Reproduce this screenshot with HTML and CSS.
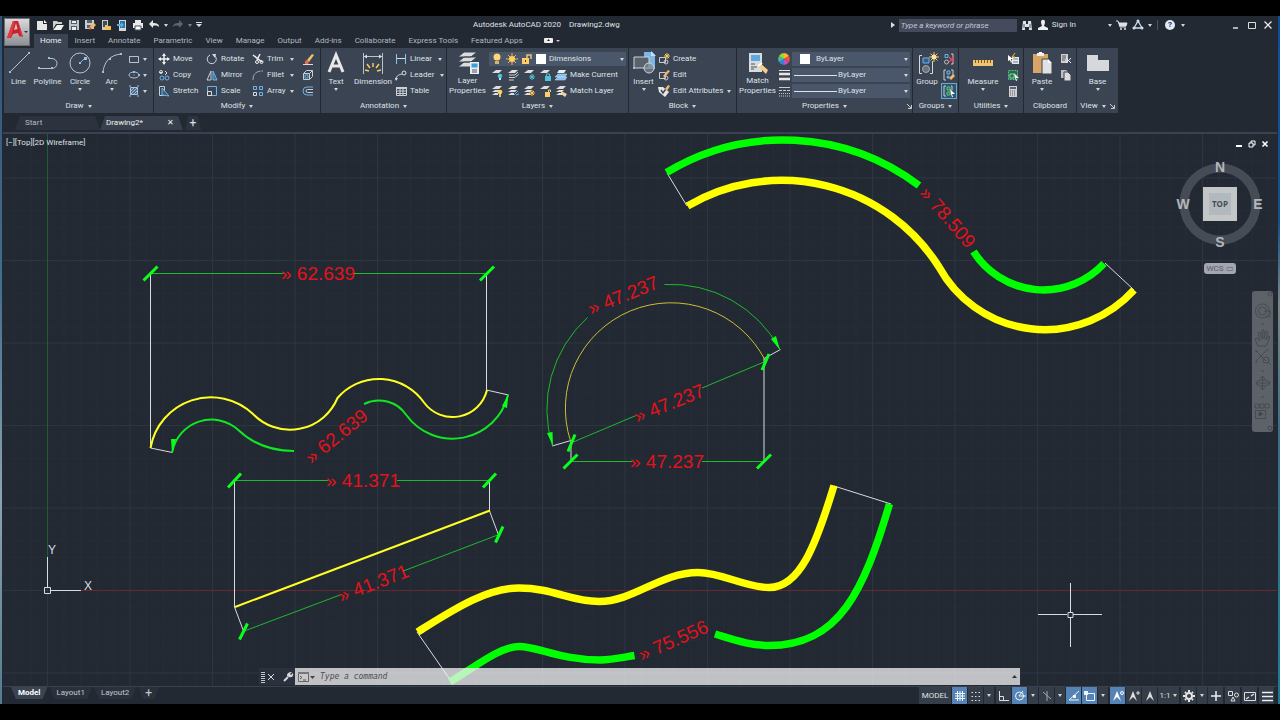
FILE: index.html
```html
<!DOCTYPE html>
<html lang="en">
<head>
<meta charset="utf-8">
<title>Autodesk AutoCAD 2020 - Drawing2.dwg</title>
<link rel="stylesheet" href="styles.css">
</head>
<body>
<div class="app">
<header class="head">
  <button class="logo" aria-label="Application menu">
    <svg width="24" height="28" viewBox="0 0 24 28"><path d="M2 20L8 3h5l5 16-4-1-1-3-5 1-2 4z" fill="#c9202b"/><path d="M9 12l2-7 1.500 6z" fill="#c5c7c9"/><path d="M2 20L8 3l2 1-4 15zM13 3l5 16-2-1z" fill="#e5383f"/><path d="M19 13h4l-2 2z" fill="#333"/></svg>
  </button>
  <div class="titlebar">
    <div class="qat">
      <button aria-label="New"><svg class="i" viewBox="0 0 12 12"><path d="M1 2h6v3h4v6H1z" fill="#e6e6e6"/><path d="M8 1l3 3H8z" fill="#fff"/></svg></button>
      <button aria-label="Open"><svg class="i" viewBox="0 0 12 12"><path d="M1 10V2h4l1 1h4v2H4z" fill="#cfcfcf"/><path d="M2 10l3-4h7l-3 5H1z" fill="#f1f1f1"/></svg></button>
      <button aria-label="Save"><svg class="i" viewBox="0 0 12 12"><path d="M1 1h10v10H1z" fill="#bfc4ca"/><path d="M3 1h6v4H3zM3 7h6v4H3z" fill="#525b68"/><path d="M4 2h4v2H4zM4 8h4v3H4z" fill="#eee"/></svg></button>
      <button aria-label="Save as"><svg class="i" viewBox="0 0 12 12"><path d="M1 1h9v9H1z" fill="#c8ccd0"/><path d="M3 1h5v3H3zM3 6h4v3H3z" fill="#5b636f"/><path d="M5 10l1-3 4-3 2 2-4 4z" fill="#efb96a"/><path d="M5 11l1-3 2 2z" fill="#e04a36"/></svg></button>
      <button aria-label="Open from web"><svg class="i" viewBox="0 0 12 12"><path d="M2 1h6v10H2z" fill="#c8ccd0"/><path d="M3 2h4v6H3z" fill="#414a58"/><path d="M5 11V6h2l1 1h3v4z" fill="#f1c24f"/></svg></button>
      <button aria-label="Save to web"><svg class="i" viewBox="0 0 12 12"><path d="M3 1h7v11H3z" fill="#d5d8db"/><path d="M4 2h5v7H4z" fill="#2d6f9e"/><path d="M1 5h4V3l3 3-3 3V7H1z" fill="#4fb2e6"/></svg></button>
      <button aria-label="Plot"><svg class="i" viewBox="0 0 12 12"><path d="M3 1h6v3H3zM1 4h10v5H1z" fill="#e9e9e9"/><path d="M3 7h6v4H3z" fill="#fff" stroke="#48515f"/></svg></button>
      <button aria-label="Undo"><svg class="i" viewBox="0 0 12 12"><path d="M1 5l4-4v3c4 0 6 1 6 4-1-1-3-2-6-1v2z" fill="#e6e6e6"/></svg></button>
      <span class="caret"></span>
      <button aria-label="Redo"><svg class="i" viewBox="0 0 12 12"><path d="M11 5L7 1v3C3 4 1 5 1 8c1-1 3-2 6-1v2z" fill="#5d6571"/></svg></button>
      <span class="caret dim"></span>
      <button class="slim" aria-label="Customize toolbar"><svg width="6" height="6" viewBox="0 0 6 6"><path d="M0 0h6v1H0zM0 2h6L3 5z" fill="#ddd"/></svg></button>
    </div>
    <div class="title"><span>Autodesk AutoCAD 2020</span><span>Drawing2.dwg</span></div>
    <div class="tools">
      <svg width="4" height="6" viewBox="0 0 4 6"><path d="M0 0l4 3-4 3z" fill="#ddd"/></svg>
      <input class="search" type="text" placeholder="Type a keyword or phrase" aria-label="Search">
      <button aria-label="Find"><svg class="i" viewBox="0 0 12 12"><path d="M2 2h3v3h2V2h3l1 9H8V8H4v3H1z" fill="#dfe3e8"/><path d="M3 5v4M9 5v4" stroke="#46505e"/></svg></button>
      <button class="signin"><svg class="i" viewBox="0 0 12 12"><path d="M4 3c0-3 4-3 4 0 0 2-1 3-1 4l4 2v2H1V9l4-2C5 6 4 5 4 3z" fill="#eee"/></svg>Sign In</button>
      <span class="caret far"></span>
      <button aria-label="App store"><svg class="i" viewBox="0 0 12 12"><path d="M0 2h2l2 6h6M3 4h8l-1 3H4z" fill="none" stroke="#dde2ea"/><path d="M3 4h8l-1 3H4z" fill="#dde2ea"/><circle cx="5" cy="10" r="1" fill="#dde2ea"/><circle cx="9" cy="10" r="1" fill="#dde2ea"/></svg></button>
      <button aria-label="Autodesk"><svg class="i" viewBox="0 0 12 12"><path d="M6 2l4 7H2z" fill="none" stroke="#cfe0f5" stroke-width="1.300"/><circle cx="6" cy="2" r="1.500" fill="#cfe0f5"/><circle cx="2" cy="9" r="1.500" fill="#cfe0f5"/><circle cx="10" cy="9" r="1.500" fill="#cfe0f5"/></svg></button>
      <span class="caret"></span><i class="rule"></i>
      <button class="help" aria-label="Help">?</button>
      <span class="caret"></span>
      <div class="win">
        <button aria-label="Minimize"><svg class="i" viewBox="0 0 12 12"><path d="M3 9h5" stroke="#ddd" stroke-width="1.500"/></svg></button>
        <button aria-label="Maximize"><svg class="i" viewBox="0 0 12 12"><path d="M2.500 3.500h7v6h-7z" fill="none" stroke="#ddd"/></svg></button>
        <button aria-label="Close"><svg class="i" viewBox="0 0 12 12"><path d="M2.500 2.500l7 7M9.500 2.500l-7 7" stroke="#eee" stroke-width="1.200"/></svg></button>
      </div>
    </div>
  </div>
  <nav class="tabs">
    <button class="on">Home</button><button>Insert</button><button>Annotate</button><button>Parametric</button><button>View</button><button>Manage</button><button>Output</button><button>Add-ins</button><button>Collaborate</button><button>Express Tools</button><button>Featured Apps</button>
    <button class="mini" aria-label="Ribbon display"><svg width="18" height="6" viewBox="0 0 18 6"><rect width="9" height="5" rx="1" fill="#eee"/><path d="M3 3h3L4.500 1z" fill="#222"/><path d="M12 2h4l-2 2z" fill="#ccc"/></svg></button>
  </nav>
</header>

<div class="ribbon">
  <section class="panel draw">
    <div class="body">
      <button class="big"><svg class="g" viewBox="0 0 24 24"><path d="M3 21L22 2" stroke="#b9c2cc"/><path d="M2 20h2v2H2zM21 1h2v2h-2z" fill="#8fc4f2"/></svg>Line</button>
      <button class="big"><svg class="g" viewBox="0 0 24 24"><path d="M3 17.500h13a5 5 0 0 0 0-10h-3" fill="none" stroke="#b9c2cc"/><path d="M2 16h2v2H2zM15 16h2v2h-2zM12 6h2v2h-2z" fill="#8fc4f2"/></svg>Polyline</button>
      <button class="big"><svg class="g" viewBox="0 0 24 24"><circle cx="12" cy="12" r="10" fill="none" stroke="#b9c2cc"/><path d="M12 12l5-5" stroke="#7fb2e0"/><path d="M11 11h2v2h-2zM16 6h3v3h-3z" fill="#8fc4f2"/></svg>Circle<span class="caret"></span></button>
      <button class="big"><svg class="g" viewBox="0 0 24 24"><path d="M3 21C4 11 10 4 21 3" fill="none" stroke="#b9c2cc"/><path d="M2 20h2v2H2zM9 7h2v2H9zM20 2h2v2h-2z" fill="#8fc4f2"/></svg>Arc<span class="caret"></span></button>
      <div class="rows">
        <button class="row" aria-label="Rectangle"><svg class="i" viewBox="0 0 12 12"><path d="M1.500 3.500h9v6h-9z" fill="none" stroke="#b9c2cc"/><path d="M1 3h1v1H1zM10 9h1v1h-1z" fill="#8fc4f2"/></svg><span class="caret"></span></button>
        <button class="row" aria-label="Ellipse"><svg class="i" viewBox="0 0 12 12"><ellipse cx="6" cy="6" rx="5" ry="3" fill="none" stroke="#b9c2cc"/><path d="M5.500 5.500h1v1h-1zM10 5h2v2h-2zM5 2h2v2H5z" fill="#8fc4f2"/></svg><span class="caret"></span></button>
        <button class="row" aria-label="Hatch"><svg class="i" viewBox="0 0 12 12"><path d="M2.500 2.500h7v7h-7z" fill="#4a6b8c" stroke="#b9c2cc"/><path d="M3 6l3-3M3 9l6-6M6 9l3-3" stroke="#8fc4f2"/><path d="M1 1h2M9 1h2M1 11h2M9 11h2" stroke="#8fc4f2"/></svg><span class="caret"></span></button>
      </div>
    </div>
    <button class="cap">Draw<span class="caret"></span></button>
  </section>

  <section class="panel modify">
    <div class="body">
      <button class="row"><svg class="i" viewBox="0 0 12 12"><path d="M6 1v10M1 6h10" stroke="#f0f0f0" stroke-width="1.500"/><path d="M6 0l2 3H4zM6 12l2-3H4zM0 6l3-2v4zM12 6L9 4v4z" fill="#f0f0f0"/></svg>Move</button>
      <button class="row"><svg class="i" viewBox="0 0 12 12"><path d="M4 2a4.500 4.500 0 1 0 5 1" fill="none" stroke="#d5dae0"/><path d="M6 1l4 0-1 4z" fill="#d5dae0"/></svg>Rotate</button>
      <button class="row"><svg class="i" viewBox="0 0 12 12"><path d="M1 2l9 7M8 1L5 7" stroke="#eee" stroke-width="1.500"/><circle cx="5" cy="9" r="1.500" fill="none" stroke="#eee"/><circle cx="9.500" cy="9" r="1.500" fill="none" stroke="#eee"/></svg>Trim<span class="caret push"></span></button>
      <button class="row" aria-label="Erase"><svg class="i" viewBox="0 0 12 12"><path d="M5 7l5-6 2 1-5 7z" fill="#f2c166"/><path d="M3 8l2-1 2 2-1 2H3z" fill="#e46b50"/><path d="M1 11.500h10" stroke="#ddd"/></svg></button>
      <button class="row"><svg class="i" viewBox="0 0 12 12"><path d="M1 3.500h3M7 2l2 2-2 2" fill="none" stroke="#ddd"/><circle cx="3" cy="3" r="1.500" fill="none" stroke="#ddd"/><circle cx="4" cy="9" r="2" fill="none" stroke="#6cb4e8"/><circle cx="9" cy="9" r="2" fill="none" stroke="#6cb4e8"/></svg>Copy</button>
      <button class="row"><svg class="i" viewBox="0 0 12 12"><path d="M5 2v9H1z" fill="none" stroke="#c8ced5"/><path d="M7 2v9h4z" fill="#3e6d94" stroke="#6cb4e8"/></svg>Mirror</button>
      <button class="row"><svg class="i" viewBox="0 0 12 12"><path d="M1 11C1 5 4 2 11 2" fill="none" stroke="#9fb4c8" stroke-dasharray="6 1"/></svg>Fillet<span class="caret push"></span></button>
      <button class="row" aria-label="Solid edit"><svg class="i" viewBox="0 0 12 12"><path d="M1.500 4.500h6v6h-6zM1.500 4.500l3-3h6l-3 3M10.500 1.500v6l-3 3" fill="none" stroke="#c8ced5"/><path d="M3 6h3v3H3z" fill="none" stroke="#6cb4e8"/></svg></button>
      <button class="row"><svg class="i" viewBox="0 0 12 12"><path d="M1.500 1.500h5v9h-5z" fill="none" stroke="#c8ced5"/><path d="M4 10V3l7 8z" fill="#3d5f7f" stroke="#6cb4e8"/></svg>Stretch</button>
      <button class="row"><svg class="i" viewBox="0 0 12 12"><path d="M1.500 1.500h9v9h-9z" fill="none" stroke="#6cb4e8"/><path d="M1.500 6.500h4v4h-4z" fill="none" stroke="#ddd"/></svg>Scale</button>
      <button class="row"><svg class="i" viewBox="0 0 12 12"><path d="M1.500 1.500h3v3h-3zM7.500 1.500h3v3h-3z" fill="none" stroke="#6cb4e8"/><path d="M1.500 7.500h3v3h-3z" fill="none" stroke="#ddd"/><path d="M7.500 7.500h3v3h-3z" fill="none" stroke="#6cb4e8"/></svg>Array<span class="caret push"></span></button>
      <button class="row" aria-label="Offset"><svg class="i" viewBox="0 0 12 12"><path d="M11 2H5a4 4 0 0 0 0 8h6" fill="none" stroke="#6cb4e8"/><path d="M11 4.500H5.500a1.500 1.500 0 0 0 0 3H11" fill="none" stroke="#ccc"/></svg></button>
    </div>
    <button class="cap">Modify<span class="caret"></span></button>
  </section>

  <section class="panel annotation">
    <div class="body">
      <button class="big"><svg class="g" viewBox="0 0 24 24"><path d="M5 21L12 4l7 17M7.500 15h9" fill="none" stroke="#e8e8e8" stroke-width="3"/></svg>Text<span class="caret"></span></button>
      <button class="big"><svg class="g" viewBox="0 0 24 24"><path d="M2.500 2v21M21.500 2v21M3 5.500h18" stroke="#b9c2cc"/><path d="M3 5.500l3-2v4zM21 5.500l-3-2v4z" fill="#ddd"/><path d="M12 12v4M6 13l3 4M18 13l-3 4M4 19l4 1M20 19l-4 1" stroke="#f4c95d" stroke-width="1.500"/></svg>Dimension</button>
      <div class="rows">
        <button class="row"><svg class="i" viewBox="0 0 12 12"><path d="M1.500 1v10M10.500 1v10" stroke="#8fc4f2"/><path d="M2 5.500h8" stroke="#ddd"/></svg>Linear<span class="caret"></span></button>
        <button class="row"><svg class="i" viewBox="0 0 12 12"><path d="M1 11c0-4 2-5 6-6" fill="none" stroke="#ddd"/><circle cx="9" cy="4" r="2" fill="none" stroke="#ddd"/><path d="M0 9h3l-2 3z" fill="#ddd"/></svg>Leader<span class="caret"></span></button>
        <button class="row"><svg class="i" viewBox="0 0 12 12"><path d="M1.500 2.500h10v8h-10zM1.500 6h10M1.500 8.500h10M5 4v6M8 4v6" fill="none" stroke="#ccd1d7"/><path d="M1 2h11v2H1z" fill="#ccd1d7"/></svg>Table</button>
      </div>
    </div>
    <button class="cap">Annotation<span class="caret"></span></button>
  </section>

  <section class="panel layers">
    <div class="body">
      <button class="big two"><svg class="g" viewBox="0 0 24 24"><path d="M8 1h13l-6 5H2zM8 6h13l-6 5H2zM8 11h13l-6 5H2z" fill="#dcdcdc" stroke="#3b4453"/><path d="M14 11h9v12h-9z" fill="#e9eef3"/><path d="M15.500 12.500h6v4h-6z" fill="#3c9ddd"/><path d="M16 19h5M16 21h5" stroke="#555"/></svg>Layer<br>Properties</button>
      <div class="rows">
        <label class="drop"><svg class="i" viewBox="0 0 12 12"><circle cx="6" cy="4" r="3.500" fill="#ffd778"/><path d="M4 8h4v3H4z" fill="#d9b56a"/></svg><svg class="i" viewBox="0 0 12 12"><path d="M6 0v12M0 6h12M2 2l8 8M10 2l-8 8" stroke="#f0b848"/><circle cx="6" cy="6" r="3" fill="#ffd066"/></svg><svg class="i" viewBox="0 0 12 12"><path d="M1 5h7v6H1z" fill="#ffce6b"/><path d="M6 5V2h4v4" fill="none" stroke="#e8c27a" stroke-width="1.500"/><path d="M4 7h1v2H4z" fill="#4a3c20"/></svg><i class="swatch"></i><select aria-label="Layer"><option>Dimensions</option></select></label>
        <div class="icons">
          <button aria-label="Off"><svg class="i" viewBox="0 0 12 12"><path d="M5 1h6L8 4H1z" fill="#ddd"/><circle cx="9" cy="7" r="2.300" fill="#4fc3d9"/><path d="M8 9h2v2H8z" fill="#aee"/></svg></button>
          <button aria-label="Isolate"><svg class="i" viewBox="0 0 12 12"><path d="M5 1h6L8 4H1z" fill="#ddd"/><path d="M2 6h6l3-3M2 8.500h6l3-3M2 11h5" fill="none" stroke="#ccc"/><path d="M9 8l3-3" stroke="#58b4ea"/></svg></button>
          <button aria-label="Freeze"><svg class="i" viewBox="0 0 12 12"><path d="M5 1h6L8 4H1z" fill="#ddd"/><path d="M9 5v6M6 8h6M7 6l4 4M11 6l-4 4" stroke="#4fc3d9"/></svg></button>
          <button aria-label="Lock"><svg class="i" viewBox="0 0 12 12"><path d="M5 1h6L8 4H1z" fill="#ddd"/><path d="M6 7h6v5H6z" fill="#4fc3d9"/><path d="M7.500 7V5h3v2" fill="none" stroke="#4fc3d9"/></svg></button>
          <button class="row"><svg class="i" viewBox="0 0 12 12"><path d="M4 1h7L9 4H2z" fill="#eee"/><path d="M3 5h9l-2 3H0zM3 8h9l-2 3H0z" fill="#7dbcec" stroke="#d5e6f5" stroke-width=".5"/></svg>Make Current</button>
        </div>
        <div class="icons">
          <button aria-label="On"><svg class="i" viewBox="0 0 12 12"><path d="M5 1h6L8 4H1zM4 5h5L7 7H1zM4 8h3v2H1z" fill="#ddd"/><circle cx="9" cy="7" r="2.300" fill="#ffcf66"/><path d="M8 9h2v3H8z" fill="#e9c06a"/></svg></button>
          <button aria-label="Unisolate"><svg class="i" viewBox="0 0 12 12"><path d="M5 1h6L8 4H1zM4 5h6L8 7H1zM4 8h3v2H1z" fill="#ddd"/><path d="M7 10l4-4M9 10l3-1" stroke="#58b4ea"/></svg></button>
          <button aria-label="Thaw"><svg class="i" viewBox="0 0 12 12"><path d="M5 1h6L8 4H1zM4 5h5L7 7H1zM4 8h3v2H1z" fill="#ddd"/><path d="M9 5v6M6 8h6M7 6l4 4M11 6l-4 4" stroke="#ffc24f"/></svg></button>
          <button aria-label="Unlock"><svg class="i" viewBox="0 0 12 12"><path d="M5 1h6L8 4H1z" fill="#ddd"/><path d="M6 7h5v5H6z" fill="#ffce6b"/><path d="M9.500 7V5h2v2" fill="none" stroke="#ffce6b"/></svg></button>
          <button class="row"><svg class="i" viewBox="0 0 12 12"><path d="M5 1h6L8 4H1zM4 5h5L7 7H1zM4 8h3v2H1z" fill="#ddd"/><path d="M6 6l6 3-2 3-4-3z" fill="#f2d49c"/></svg>Match Layer</button>
        </div>
      </div>
    </div>
    <button class="cap">Layers<span class="caret"></span></button>
  </section>

  <section class="panel block">
    <div class="body">
      <button class="big"><svg class="g" viewBox="0 0 24 24"><path d="M12 1h8l3 3v14H12z" fill="#7ab8ea"/><path d="M19 0v5h5z" fill="#bfe0fa"/><path d="M2 6h15v11H2z" fill="#5a616c" stroke="#cfd3d8"/><circle cx="17" cy="17" r="5" fill="#7d8792" fill-opacity=".7" stroke="#cfd3d8"/><path d="M1 16h2v2H1z" fill="#8fc4f2"/></svg>Insert<span class="caret"></span></button>
      <div class="rows">
        <button class="row"><svg class="i" viewBox="0 0 12 12"><path d="M1.500 4.500h6v5h-6z" fill="none" stroke="#ccc"/><circle cx="8" cy="9" r="2" fill="none" stroke="#ccc"/><path d="M9 0v6M6 3h6M7 1l4 4M11 1L7 5" stroke="#f7c65c"/></svg>Create</button>
        <button class="row"><svg class="i" viewBox="0 0 12 12"><path d="M1.500 3.500h6v6h-6z" fill="none" stroke="#ccc"/><circle cx="8" cy="9" r="2" fill="none" stroke="#ccc"/><path d="M5 7l5-6 2 1-5 6z" fill="#f2b968"/></svg>Edit</button>
        <button class="row"><svg class="i" viewBox="0 0 12 12"><path d="M0 2h5l6 5-4 5-6-5z" fill="#e6e6e6"/><path d="M3 5l2 3 5-7" fill="none" stroke="#3b4453" stroke-width="1.500"/><path d="M7 4l3-4 2 1-3 5z" fill="#f2b968"/></svg>Edit Attributes<span class="caret push"></span></button>
      </div>
    </div>
    <button class="cap">Block<span class="caret"></span></button>
  </section>

  <section class="panel properties">
    <div class="body">
      <button class="big two"><svg class="g" viewBox="0 0 24 24"><path d="M3 2h13v19H3z" fill="#d7dade"/><path d="M5 4h9v6H5z" fill="#5ea9e2"/><path d="M5 13h4M5 16h6M5 18h3" stroke="#555"/><path d="M11 14l3-2 8 7-2 4z" fill="#f6cd8b"/><path d="M12 15l4-3" stroke="#fff" stroke-width="2"/></svg>Match<br>Properties</button>
      <div class="rows">
        <label class="prop"><svg class="i" viewBox="0 0 12 12"><path d="M6 6V0a6 6 0 0 1 5 3z" fill="#ffb52e"/><path d="M6 6l5-3a6 6 0 0 1 0 6z" fill="#f0532d"/><path d="M6 6l5 3a6 6 0 0 1-5 3z" fill="#c34fc3"/><path d="M6 6v6a6 6 0 0 1-5-3z" fill="#3d7fe0"/><path d="M6 6L1 9a6 6 0 0 1 0-6z" fill="#3dbf9a"/><path d="M6 6L1 3a6 6 0 0 1 5-3z" fill="#a6d13c"/></svg><span class="drop"><i class="swatch"></i><select aria-label="Color"><option>ByLayer</option></select></span></label>
        <label class="prop"><svg class="i" viewBox="0 0 12 12"><path d="M1 1.500h11" stroke="#e5e5e5"/><path d="M1 5h11M1 10h11" stroke="#e5e5e5" stroke-width="2.500"/></svg><span class="drop line"><i></i><select aria-label="Lineweight"><option>ByLayer</option></select></span></label>
        <label class="prop"><svg class="i" viewBox="0 0 12 12"><path d="M1 2.500h11" stroke="#ccc"/><path d="M1 5.500h11" stroke="#ccc" stroke-dasharray="3 1"/><path d="M1 8.500h11M1 11h11" stroke="#ccc" stroke-dasharray="1 1"/></svg><span class="drop line"><i></i><select aria-label="Linetype"><option>ByLayer</option></select></span></label>
      </div>
    </div>
    <button class="cap">Properties<span class="caret"></span><svg class="launch" width="5" height="5" viewBox="0 0 5 5"><path d="M0 0l4 4M4.500 1v3.500H1" stroke="#ccc" fill="none"/></svg></button>
  </section>

  <section class="panel groups">
    <div class="body">
      <button class="big"><svg class="g" viewBox="0 0 24 24"><path d="M7 4.500H4.500v18H7M15 22.500h2.500V10" fill="none" stroke="#d5d9de"/><path d="M8 7h6v5H8z" fill="#2f5f8c" stroke="#6cb4e8"/><circle cx="11" cy="18" r="3.500" fill="#6a727d" stroke="#aaa"/><path d="M19 1v10M14 6h10M15.500 2.500l7 7M22.500 2.500l-7 7" stroke="#f5c469"/><circle cx="19" cy="6" r="2.500" fill="#ffe3a1"/></svg>Group</button>
      <div class="rows">
        <button class="row" aria-label="Ungroup"><svg class="i" viewBox="0 0 12 12"><path d="M2 1.500h3v3H2z" fill="none" stroke="#6cb4e8"/><circle cx="3.500" cy="9" r="2" fill="none" stroke="#bbb"/><path d="M8 1h2v10H8" fill="none" stroke="#ccc"/><path d="M6 4l5 5M11 4L6 9" stroke="#e0455a" stroke-width="1.500"/></svg></button>
        <button class="row" aria-label="Group edit"><svg class="i" viewBox="0 0 12 12"><path d="M3 1H1v10h2M8 1h2v5" fill="none" stroke="#ccc"/><path d="M4 2h3v3H4z" fill="#2f5f8c" stroke="#6cb4e8"/><circle cx="5" cy="8" r="1.500" fill="#6cb4e8"/><path d="M6 9l4-4 2 2-4 4z" fill="#f2b968"/></svg></button>
        <button class="row sel" aria-label="Group selection"><svg class="i" viewBox="0 0 12 12"><path d="M3 1H1v10h2M8 1h1v4" fill="none" stroke="#ccc"/><path d="M4 2h3v3H4zM4 7h3v3H4z" fill="#2f7b50" stroke="#59c083"/><path d="M7 4l5 5H9l1 3H9L8 9z" fill="#fff"/></svg></button>
      </div>
    </div>
    <button class="cap">Groups<span class="caret"></span></button>
  </section>

  <section class="panel utilities">
    <div class="body">
      <button class="big"><svg class="g" viewBox="0 0 24 24"><path d="M2 9h20v6H2z" fill="#f1c46e"/><path d="M4.500 9v3M7.500 9v3M10.500 9v3M13.500 9v3M16.500 9v3M19.500 9v3" stroke="#7a5b24"/></svg>Measure<span class="caret"></span></button>
      <div class="rows">
        <button class="row" aria-label="Quick select"><svg class="i" viewBox="0 0 12 12"><path d="M5 4h7v7H5z" fill="#e8e8e8"/><path d="M6 6h5M6 9h5" stroke="#5687b4"/><path d="M8 0L5 4h3L6 7" fill="none" stroke="#f5c050"/><path d="M1 2l5 4H4l1 3-1 1-1-3-2 1z" fill="#fff"/></svg></button>
        <button class="row" aria-label="Select all"><svg class="i" viewBox="0 0 12 12"><path d="M1.500 1.500h9v9h-9z" fill="#28684c" stroke="#59c083" stroke-dasharray="2 1"/><path d="M3 5h4v4H3z" fill="none" stroke="#7fd9a3"/><path d="M7 4l5 5H9l1 3H9L8 9z" fill="#eee"/></svg></button>
        <button class="row" aria-label="Calculator"><svg class="i" viewBox="0 0 12 12"><path d="M2 1h8v11H2z" fill="#cfcfcf"/><path d="M3 2h6v2H3z" fill="#5c6470"/><path d="M3 6h6M3 8h6M3 10h6" stroke="#5c6470" stroke-dasharray="1 1"/></svg></button>
      </div>
    </div>
    <button class="cap">Utilities<span class="caret"></span></button>
  </section>

  <section class="panel clipboard">
    <div class="body">
      <button class="big"><svg class="g" viewBox="0 0 24 24"><path d="M3 3h15v19H3z" fill="#d9a566"/><path d="M7 2h7v3H7z" fill="#eee"/><path d="M9 1h3v2H9z" fill="#fff"/><path d="M12 8h6l4 4v11H12z" fill="#dfe1e4" stroke="#3b4453"/><path d="M18 8v4h4z" fill="#fff"/></svg>Paste<span class="caret"></span></button>
      <div class="rows">
        <button class="row" aria-label="Cut"><svg class="i" viewBox="0 0 12 12"><path d="M1 1h7v9H1z" fill="#cfcfcf"/><path d="M2 3h4M2 5h4M2 7h3" stroke="#555"/><path d="M6 5l5 5M11 5l-5 5" stroke="#eee"/></svg></button>
        <button class="row" aria-label="Copy clip"><svg class="i" viewBox="0 0 12 12"><path d="M1 1h5l2 2v6H1z" fill="#bfbfbf"/><path d="M4 3h4l3 3v6H4z" fill="#dcdcdc" stroke="#3b4453"/></svg></button>
      </div>
    </div>
    <div class="cap">Clipboard</div>
  </section>

  <section class="panel view">
    <div class="body">
      <button class="big"><svg class="g" viewBox="0 0 24 24"><path d="M1 4h11v5h11v11H1z" fill="#d6d8db"/></svg>Base<span class="caret"></span></button>
    </div>
    <button class="cap">View<span class="caret"></span><svg width="5" height="5" viewBox="0 0 5 5"><path d="M0 0l4 4M4.500 1v3.500H1" stroke="#ccc" fill="none"/></svg></button>
  </section>
</div>

<nav class="files">
  <button class="file">Start</button><button class="file on">Drawing2*<span>✕</span></button><button class="add" aria-label="New drawing">+</button>
</nav>

<main class="viewport">
  <svg class="drawing" aria-label="Model space">
    <defs>
      <pattern id="grid" x="47" y="590" width="82.500" height="82.500" patternUnits="userSpaceOnUse">
        <path d="M17 0v83M33.500 0v83M50 0v83M66.500 0v83M0 17h83M0 33.500h83M0 50h83M0 66.500h83" stroke="#252c37"/>
        <path d="M.5 0v83M0 .5h83" stroke="#2d3541"/>
      </pattern>
    </defs>
    <g transform="translate(-3 -134)" fill="none">
      <rect x="3" y="134" width="100%" height="100%" fill="url(#grid)"/>
      <path d="M81 590.500H4000" stroke="#632a33"/>
      <path d="M47.500 134v423" stroke="#1f5f2e"/>
      <g stroke="#d8dbe0">
        <path d="M47.500 557v31M50 590.500h31M44.500 587.500h6v6h-6z"/>
        <path d="M1038 614.500h29M1073 614.500h29M1070.500 583v29M1070.500 618v29M1068 612.500h5v5h-5z"/>
        <path d="M150.500 448v-174M150.500 448l22 4.500M486.500 274v116l22 5M234.500 481v126l9 24M489.500 481v30l9 24M552 446l19-5.500v21M780.500 349.500l-16.500 9v103M667 173l20 33M1105 263l29 27M417 632l34 49M834 486l57 18"/>
      </g>
      <g stroke="#1fb92b">
        <path d="M150 273.500h134M354 273.500h133M235 480.500h94M397 480.500h93M243 631.500L340 595M402 571.500l97-37M572 442.500l64-27M702 388l62-26M570 461.500h62M702 461.500h62"/>
        <path d="M552.500 446A123.700 123.700 0 0 1 587.500 317.500M664.500 284.500A123.700 123.700 0 0 1 780 349.500"/>
      </g>
      <path d="M570.500 441A105.700 105.700 0 0 1 765 360" stroke="#cbbf36"/>
      <path d="M235 607L490 510.500" stroke="#ffff22" stroke-width="2"/>
      <path d="M150.500 448A61.300 61.300 0 0 1 253 414A51.400 51.400 0 0 0 337.500 398A54.800 54.800 0 0 1 424 402.500A35.400 35.400 0 0 0 487 390" stroke="#ffff22" stroke-width="2"/>
      <path d="M172.300 452A39.800 39.800 0 0 1 238.300 430C253 444 270 451 294 451M364 404A33.300 33.300 0 0 1 406.300 415A57 57 0 0 0 508 395" stroke="#11e622" stroke-width="2"/>
      <path d="M171 439h5l-4 14zM508.500 394l-6.500 12 5 2zM547 433l5.500-1 .5 14zM780 350l-9-11 5-3z" fill="#0bff1b"/>
      <path d="M143.500 280.500l14-14M480 280.500l14-14M228 487.500l13-14M483 487.500l13-14M239.500 639.500l8-16M495.500 542.500l7.500-16M568 451.500l7-17M762 370l7-16M563.500 468.500l14-14M757 468.500l14-14" stroke="#0bff1b" stroke-width="3"/>
      <g stroke-width="7.500">
        <path d="M687.500 206A186 186 0 0 1 939 267A120.500 120.500 0 0 0 1134 290M417.500 632C450 612 485 588 519 588S570 601.500 599 601.500C634 601.500 660 572.500 698 572.500C722 572.500 745 587.500 769 587.500C800 587.500 816 545 834 485.500" stroke="#ff0"/>
        <path d="M666.500 172.500A225.300 225.300 0 0 1 919 185.500M973.500 251.500A82.700 82.700 0 0 0 1104 263.500M450 682C475 667 500 646.500 519 646.500S560 660 600 660C612 660 620 658 634.500 655.500M715 634C735 640 750 645.500 769 645.500C840 645.500 864 590 889.500 504" stroke="#0f0"/>
      </g>
      <g class="dims">
        <text x="318" y="280">» 62.639</text>
        <text x="363" y="487">» 41.371</text>
        <text x="667" y="468">» 47.237</text>
        <text transform="translate(336 436) rotate(-39)" y="7">» 62.639</text>
        <text transform="translate(373 583) rotate(-21)" y="7">» 41.371</text>
        <text transform="translate(669 403) rotate(-22)" y="7">» 47.237</text>
        <text transform="translate(623 295) rotate(-22)" y="7">» 47.237</text>
        <text transform="translate(948 217) rotate(49)" y="7">» 78.509</text>
        <text transform="translate(673 640) rotate(-24)" y="7">» 75.556</text>
      </g>
      <g class="ucs"><text x="52" y="554">Y</text><text x="88" y="590">X</text></g>
    </g>
  </svg>
  <div class="vp-label">[−][Top][2D Wireframe]</div>
  <div class="vp-win">
    <button aria-label="Minimize drawing"><svg class="i" viewBox="0 0 12 12"><path d="M3 8h6" stroke="#fff" stroke-width="2"/></svg></button>
    <button aria-label="Restore drawing"><svg class="i" viewBox="0 0 12 12"><path d="M3 5h4v4H3zM5 5V3h4v4H7" fill="none" stroke="#fff"/></svg></button>
    <button aria-label="Close drawing"><svg class="i" viewBox="0 0 12 12"><path d="M3.500 3.500l5 5M8.500 3.500l-5 5" stroke="#fff" stroke-width="1.600"/></svg></button>
  </div>
  <div class="cube">
    <svg width="90" height="90" viewBox="0 0 90 90"><circle cx="45" cy="45" r="36" fill="none" stroke="#464c55" stroke-width="9"/><path d="M28 28h34v34H28z" fill="#c4c5c7"/><path d="M34 34h22v22H34z" fill="#b2b9be"/><g class="compass"><text x="45" y="13">N</text><text x="45" y="88">S</text><text x="8" y="50">W</text><text x="83" y="50">E</text></g><text class="top" x="45" y="48">TOP</text></svg>
    <button class="wcs">WCS ▭</button>
  </div>
  <div class="navbar">
    <svg width="21" height="141" viewBox="0 0 21 141" fill="none" stroke="#464b51"><circle cx="18" cy="3" r="2"/><circle cx="18" cy="137" r="2"/><circle cx="10.500" cy="20" r="7"/><circle cx="10.500" cy="20" r="4"/><path d="M12 20h6v6h-5M9 33h3"/><path d="M6 55L3 48l2-1 3 3-2-8 2-1 2 7V39h2v9l2-8 2 1-2 8 3-4 1 1-4 9H9zM4 60l10 10M14 60L4 70M3 60h3M14 59h3M3 71h3"/><circle cx="14" cy="69" r="3"/><path d="M16 71l3 3M9 80h3M10.500 85v14M4 92h14M8 88l2.500-3 2.500 3M8 96l2.500 3 2.500-3"/><ellipse cx="11" cy="92" rx="7" ry="3"/><path d="M9 106h3M3 113h4v4H3zM8 113h4v4H8zM13 113h4v4h-4zM3.500 119.500h10v8h-10z"/><path d="M7 121l4 2-4 2z" fill="#3b4046"/></svg>
  </div>
  <div class="command">
    <div class="handle">
      <i class="grip"></i>
      <button aria-label="Close command line"><svg class="i" viewBox="0 0 12 12"><path d="M3 3l6 6M9 3l-6 6" stroke="#d5d8dc"/></svg></button>
      <button class="wrench" aria-label="Customize"><svg class="i" viewBox="0 0 12 12"><path d="M2 10l4-4" stroke="#d5d8dc" stroke-width="2"/><path d="M10 1L8 3l1 1 2-2c1 3-1 5-4 4L5 5c0-3 2-4 5-4z" fill="#d5d8dc"/></svg></button>
    </div>
    <div class="prompt">
      <svg width="18" height="10" viewBox="0 0 18 10"><path d="M.5.5h10v9H.500z" fill="#c9c9c9" stroke="#666"/><path d="M0 0h11v2H0z" fill="#777"/><path d="M2 4l2 1.500L2 7M5 8h3" fill="none" stroke="#555"/><path d="M12 4h5l-2.500 3z" fill="#444"/></svg>
      <input type="text" placeholder="Type a command" aria-label="Command">
      <svg width="5" height="3" viewBox="0 0 5 3"><path d="M0 3h5L2.500 0z" fill="#333"/></svg>
    </div>
  </div>
</main>

<footer class="foot">
  <nav class="layouts"><button class="on">Model</button><button>Layout1</button><button>Layout2</button><button class="plus" aria-label="New layout">+</button></nav>
  <div class="status">
    <button class="model">MODEL</button>
    <button class="on" aria-label="Grid"><svg class="i" viewBox="0 0 12 12"><path d="M3.500 1v10M6 1v10M8.500 1v10M1 3.500h10M1 6h10M1 8.500h10" stroke="#eef4fa"/></svg></button>
    <button aria-label="Snap"><svg class="i" viewBox="0 0 12 12"><path d="M1.500 2.500h9M1.500 6.500h9M1.500 10.500h9" stroke="#ddd" stroke-dasharray="1.500 2"/></svg></button>
    <span class="more"><span class="caret"></span></span>
    <button class="gap" aria-label="Ortho"><svg class="i" viewBox="0 0 12 12"><path d="M1.500 1v9.500H11M1.500 6.500h4v4" fill="none" stroke="#ddd"/></svg></button>
    <button class="on" aria-label="Polar"><svg class="i" viewBox="0 0 12 12"><circle cx="5.500" cy="6" r="4" fill="none" stroke="#eef4fa"/><path d="M5 6h7M5 6l4-5" stroke="#eef4fa"/></svg></button>
    <span class="more"><span class="caret"></span></span>
    <button aria-label="Isodraft"><svg class="i" viewBox="0 0 12 12"><path d="M6 1v10M2 2l8 7" stroke="#aaa"/></svg></button>
    <span class="more"><span class="caret"></span></span>
    <button class="on" aria-label="Object tracking"><svg class="i" viewBox="0 0 12 12"><path d="M11 1L1 10h10" fill="none" stroke="#eef4fa"/><path d="M5 5h3v3H5z" fill="#eef4fa"/></svg></button>
    <button class="on" aria-label="Object snap"><svg class="i" viewBox="0 0 12 12"><path d="M2.500 3.500h8v7h-8z" fill="none" stroke="#eef4fa"/><path d="M0 1h4v4H0z" fill="#eef4fa"/></svg></button>
    <span class="more"><span class="caret"></span></span>
    <button class="on gap" aria-label="Annotation visibility"><svg class="i" viewBox="0 0 12 12"><path d="M5 1l4 10-4-4-4 4z" fill="#fff"/><circle cx="10" cy="3" r="1.500" fill="none" stroke="#fff"/></svg></button>
    <button aria-label="Auto scale"><svg class="i" viewBox="0 0 12 12"><path d="M5 1l4 10-4-4-4 4z" fill="#ddd"/><path d="M8 3h4M10 1v4" stroke="#ddd"/></svg></button>
    <button aria-label="Annotation"><svg class="i" viewBox="0 0 12 12"><path d="M6 1l4 10-4-4-4 4z" fill="#ddd"/></svg></button>
    <button class="scale">1:1<span class="caret"></span></button>
    <button class="gap" aria-label="Workspace"><svg class="i" viewBox="0 0 12 12"><circle cx="6" cy="6" r="3" fill="none" stroke="#e5e5e5" stroke-width="2"/><path d="M6 0v2M6 10v2M0 6h2M10 6h2M2 2l1 1M9 9l1 1M10 2L9 3M3 9l-1 1" stroke="#e5e5e5" stroke-width="2"/></svg></button>
    <span class="more"><span class="caret"></span></span>
    <button aria-label="Monitor"><svg class="i" viewBox="0 0 12 12"><path d="M6 1v10M1 6h10" stroke="#eee" stroke-width="1.500"/></svg></button>
    <button class="gap" aria-label="Isolate objects"><svg class="i" viewBox="0 0 12 12"><path d="M1.500 1.500h4v4h-4zM4 11l2-4 2 4z" fill="none" stroke="#ddd"/><circle cx="9.500" cy="5" r="2" fill="none" stroke="#ddd"/></svg></button>
    <button class="gap" aria-label="Clean screen"><svg class="i" viewBox="0 0 12 12"><path d="M.5 2.500h11v8H.500z" fill="none" stroke="#ddd"/><path d="M7 6l3-2M2 9l3-2" stroke="#ddd" stroke-width="1.500"/></svg></button>
    <button class="gap" aria-label="Customization"><svg class="i" viewBox="0 0 12 12"><path d="M1 2.500h11M1 6.500h11M1 10.500h11" stroke="#eee" stroke-width="1.300"/></svg></button>
  </div>
</footer>
</div>
</body>
</html>
```
FILE: styles.css
```css
* { box-sizing: border-box; }
body {
  margin: 0;
  height: 100vh;
  padding: 16px 0;
  background: #000;
  color: #dfe2e6;
  font: 8px/12px Roboto, "Open Sans", sans-serif;
  overflow: hidden;
}
button, input, select { font: inherit; color: inherit; margin: 0; padding: 0; border: 0; background: none; }
button { display: inline-flex; align-items: center; justify-content: center; white-space: nowrap; }
svg { display: block; flex: none; }
.i { width: 12px; height: 12px; }
.g { width: 24px; height: 24px; }
.caret { flex: none; width: 0; height: 0; border: 2px solid transparent; border-top: 3px solid #cfd3d8; border-bottom: 0; }
.caret.dim { border-top-color: #7b828c; }

.app {
  height: 100%;
  display: flex;
  flex-direction: column;
  padding: 0 3px;
  background:
    linear-gradient(#2f5277, #43708f 40%, #8ba3b0 70%, #567b90) left / 2px 100% no-repeat,
    linear-gradient(#0b4fa0, #16518d 30%, #7b8a86 42%, #3d6f86 60%, #1b7c96) right / 2px 100% no-repeat,
    #222933;
}

/* title bar and ribbon tabs */
.head { display: grid; grid-template-columns: 31px 1fr; grid-template-rows: 18px 14px; }
.logo { grid-row: 1 / 3; width: 26px; height: 28px; margin: 2px 0 0 1px; background: linear-gradient(#d8d9db, #8d9094); border: 1px solid #6b6f75; }
.titlebar { display: flex; justify-content: space-between; align-items: center; min-width: 0; }
.qat { display: flex; align-items: center; gap: 4px; padding-left: 2px; }
.title { display: flex; gap: 8px; }
.tools { display: flex; align-items: center; gap: 4px; }
.search { width: 118px; height: 13px; padding: 0 2px; background: #454b5c; font-style: italic; }
.search::placeholder { color: #c3c7d0; opacity: 1; }
.signin { gap: 3px; }
.tools .far { margin-left: 28px; }
.rule { width: 1px; height: 10px; margin: 0 1px; background: #4b535f; }
.help { width: 10px; height: 10px; margin: 0 2px; border-radius: 50%; background: #dfe9f8; color: #16345e; font-weight: 700; }
.win { display: flex; gap: 4px; margin: 0 3px 0 41px; }
.tabs { display: flex; gap: 1px; color: #b2b8c0; }
.tabs button { padding: 0 6px; }
.tabs .on { background: #3b4453; color: #f0f0f0; }
.tabs .mini { padding: 0 14px; }

/* ribbon */
.ribbon { display: flex; gap: 1px; margin-left: 1px; flex: none; }
.panel { display: flex; flex-direction: column; background: #3b4453; flex: none; }
.body { display: grid; height: 51px; padding-top: 3px; }
.cap { height: 14px; width: 100%; display: flex; align-items: center; justify-content: center; gap: 4px; text-align: center; }
.cap .launch { margin: 0 -65px 0 56px; }
.big { flex-direction: column; justify-content: flex-start; line-height: 11px; }
.big .g { margin-bottom: 1px; }
.big .caret { margin-top: 1px; }
.big.two { line-height: 10px; }
.rows { display: flex; flex-direction: column; }
.row { height: 16px; gap: 3px; justify-content: flex-start; }
.row .caret { margin-left: 3px; }
.row .caret.push { margin-left: auto; margin-right: 8px; }
.draw { width: 149px; }
.draw .body { grid-template-columns: 29px 29px 36px 27px 1fr; }
.draw .rows { padding-left: 3px; }
.draw .row .caret { margin-left: 0; }
.modify { width: 166px; }
.modify .body { grid-template: repeat(3, 16px) / 48px 46px 50px 14px; padding-left: 4px; }
.annotation { width: 125px; }
.annotation .body { grid-template-columns: 30px 44px 1fr; }
.layers { width: 181px; }
.layers .body { grid-template-columns: 41px 1fr; }
.layers .rows { padding: 0 2px 0 1px; }
.icons { display: flex; gap: 4px; height: 16px; padding-left: 2px; }
.drop { position: relative; display: flex; align-items: center; flex: 1; gap: 3px; height: 14px; margin: 1px 0; padding-left: 2px; background: #4a566a; }
.layers .drop { flex: none; }
.swatch { width: 10px; height: 10px; background: #fff; flex: none; }
.drop select { flex: 1; min-width: 0; height: 14px; appearance: none; }
.drop::after { content: ""; position: absolute; right: 2px; top: 6px; border: 2px solid transparent; border-top: 3px solid #d5d8dc; border-bottom: 0; }
.block { width: 107px; }
.block .body { grid-template-columns: 29px 1fr; }
.block .caret.push { margin-right: 5px; }
.properties { width: 175px; }
.properties .body { grid-template-columns: 41px 1fr; }
.prop { display: flex; align-items: center; gap: 2px; height: 16px; padding-right: 2px; }
.prop .swatch { margin: 0 3px 0 6px; }
.drop.line { gap: 1px; }
.line i { width: 43px; height: 1px; background: #dfe2e6; }
.groups { width: 45px; }
.groups .body { grid-template-columns: 28px 1fr; }
.groups .row { width: 16px; justify-content: center; }
.sel { background: #31566f; outline: 1px solid #6aa7d2; outline-offset: -1px; }
.utilities { width: 64px; }
.utilities .body { grid-template-columns: 48px 1fr; }
.clipboard { width: 52px; }
.clipboard .body { grid-template-columns: 36px 1fr; }
.view { width: 41px; }

/* drawing file tabs */
.files { flex: none; display: flex; align-items: flex-end; height: 21px; padding: 0 12px 2px; border-bottom: 2px solid #3a4150; }
.file { width: 85px; height: 14px; justify-content: flex-start; padding-left: 10px; background: #2c333f; color: #b5bac2; clip-path: polygon(5px 0, calc(100% - 5px) 0, 100% 100%, 0 100%); }
.file.on { width: 83px; background: #38404d; color: #f0f0f0; padding: 0 9px 0 6px; justify-content: space-between; }
.add { width: 16px; height: 14px; margin-left: 2px; background: #2c333f; font-size: 12px; clip-path: polygon(3px 0, calc(100% - 3px) 0, 100% 100%, 0 100%); }

/* model space */
.viewport { position: relative; flex: 1; min-height: 0; overflow: hidden; }
.drawing { width: 100%; height: 100%; }
.dims text { fill: #e4121a; font: 19px "Liberation Sans", sans-serif; text-anchor: middle; }
.ucs text { fill: #d8dbe0; font: 12px "Liberation Sans", sans-serif; text-anchor: middle; }
.vp-label { position: absolute; left: 3px; top: 3px; }
.vp-win { position: absolute; right: 6px; top: 4px; display: flex; gap: 1px; }
.cube { position: absolute; right: 12px; top: 25px; display: flex; flex-direction: column; align-items: center; gap: 14px; }
.cube text { text-anchor: middle; }
.compass text { fill: #b3b7bc; font: bold 14px "Liberation Sans", sans-serif; }
.cube .top { fill: #444b53; font: bold 8px "Open Sans", sans-serif; }
.wcs { width: 32px; height: 11px; border-radius: 3px; background: #a3a6b0; color: #565b66; line-height: 11px; }
.navbar { position: absolute; right: 4px; top: 157px; border-radius: 3px; background: #5d6268; }
.command { position: absolute; left: 256px; right: 257px; bottom: 1px; height: 17px; display: flex; }
.handle { display: flex; align-items: center; width: 36px; padding-left: 2px; background: #2b313c; }
.handle .wrench { margin-left: 5px; }
.grip { width: 4px; height: 12px; background: repeating-linear-gradient(#222933 0 1px, #c5c9ce 1px 2px); }
.prompt { flex: 1; display: flex; align-items: center; gap: 4px; padding: 0 3px; background: rgba(242, 242, 242, .76); }
.prompt input { flex: 1; min-width: 0; font: italic 8px "DejaVu Sans Mono", monospace; color: #333; }
.prompt input::placeholder { color: #4c4f54; opacity: 1; }

/* layout tabs and status bar */
.foot { flex: none; display: flex; justify-content: space-between; height: 18px; border-top: 1px solid #39414d; }
.layouts { display: flex; gap: 2px; height: 12px; padding-left: 8px; }
.layouts button { padding: 0 7px; background: #2a313c; clip-path: polygon(0 0, 100% 0, calc(100% - 5px) 100%, 5px 100%); color: #c5c9cf; }
.layouts .on { background: #3b4453; color: #fff; font-weight: 700; }
.layouts .plus { font-size: 12px; }
.status { display: flex; gap: 1px; height: 17px; padding-right: 3px; }
.status button, .more { width: 15px; background: #353d49; }
.status .more { width: 10px; display: flex; align-items: center; justify-content: center; }
.status .on { background: #5583b5; }
.status .model { width: 32px; }
.status .scale { width: 21px; gap: 3px; }
.status .gap { margin-left: 1px; }
```
